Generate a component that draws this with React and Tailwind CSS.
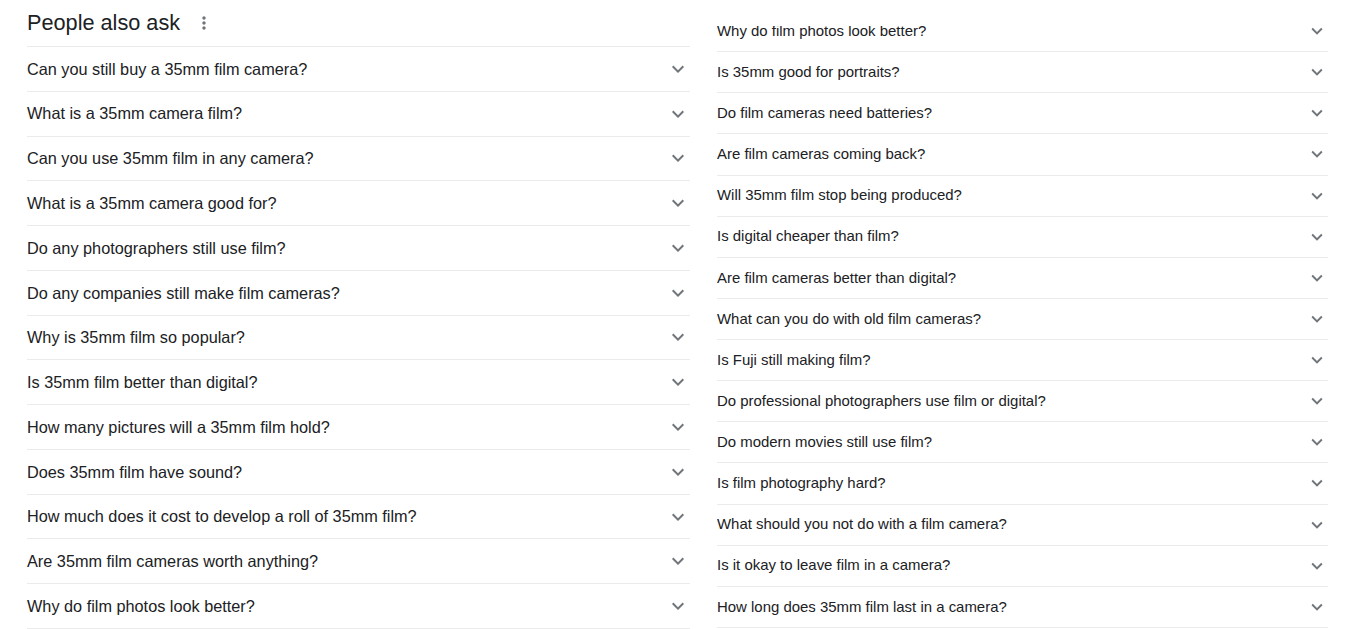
import React from 'react';

const leftQuestions = [
  'Can you still buy a 35mm film camera?',
  'What is a 35mm camera film?',
  'Can you use 35mm film in any camera?',
  'What is a 35mm camera good for?',
  'Do any photographers still use film?',
  'Do any companies still make film cameras?',
  'Why is 35mm film so popular?',
  'Is 35mm film better than digital?',
  'How many pictures will a 35mm film hold?',
  'Does 35mm film have sound?',
  'How much does it cost to develop a roll of 35mm film?',
  'Are 35mm film cameras worth anything?',
  'Why do film photos look better?',
];

const rightQuestions = [
  'Why do film photos look better?',
  'Is 35mm good for portraits?',
  'Do film cameras need batteries?',
  'Are film cameras coming back?',
  'Will 35mm film stop being produced?',
  'Is digital cheaper than film?',
  'Are film cameras better than digital?',
  'What can you do with old film cameras?',
  'Is Fuji still making film?',
  'Do professional photographers use film or digital?',
  'Do modern movies still use film?',
  'Is film photography hard?',
  'What should you not do with a film camera?',
  'Is it okay to leave film in a camera?',
  'How long does 35mm film last in a camera?',
];

function Chevron({ size }) {
  return (
    <svg width={size} height={size} viewBox="0 0 24 24" className="shrink-0 fill-[#70757a]">
      <path d="M16.59 8.59L12 13.17 7.41 8.59 6 10l6 6 6-6z" />
    </svg>
  );
}

function MoreVert() {
  return (
    <svg width="20" height="20" viewBox="0 0 24 24" className="fill-[#70757a]">
      <path d="M12 8c1.1 0 2-.9 2-2s-.9-2-2-2-2 .9-2 2 .9 2 2 2zm0 2c-1.1 0-2 .9-2 2s.9 2 2 2 2-.9 2-2-.9-2-2-2zm0 6c-1.1 0-2 .9-2 2s.9 2 2 2 2-.9 2-2-.9-2-2-2z" />
    </svg>
  );
}

export default function App() {
  return (
    <div className="flex h-[629px] w-[1346px] overflow-hidden bg-white font-['Liberation_Sans',Arial,sans-serif] text-[#202124]">
      <div className="ml-[27px] w-[663px] shrink-0">
        <div className="flex h-[47px] items-center gap-[14px] border-b border-[#ebebeb]">
          <h2 className="text-[21.7px] leading-none">People also ask</h2>
          <MoreVert />
        </div>
        {leftQuestions.map((q) => (
          <div key={q} className="flex h-[44.77px] items-center justify-between border-b border-[#ebebeb] text-[16.27px]">
            <span>{q}</span>
            <Chevron size={24} />
          </div>
        ))}
      </div>

      {/* right column is a scrolled view, top row partly hidden */}
      <div className="ml-[27px] mt-[26px] w-[611px] shrink-0 overflow-hidden">
        <div className="-mt-[15px]">
          {rightQuestions.map((q, i) => (
            <div key={q + i} className="flex h-[41.14px] items-center justify-between border-b border-[#ebebeb] text-[14.95px]">
              <span>{q}</span>
              <Chevron size={22} />
            </div>
          ))}
        </div>
      </div>
    </div>
  );
}
